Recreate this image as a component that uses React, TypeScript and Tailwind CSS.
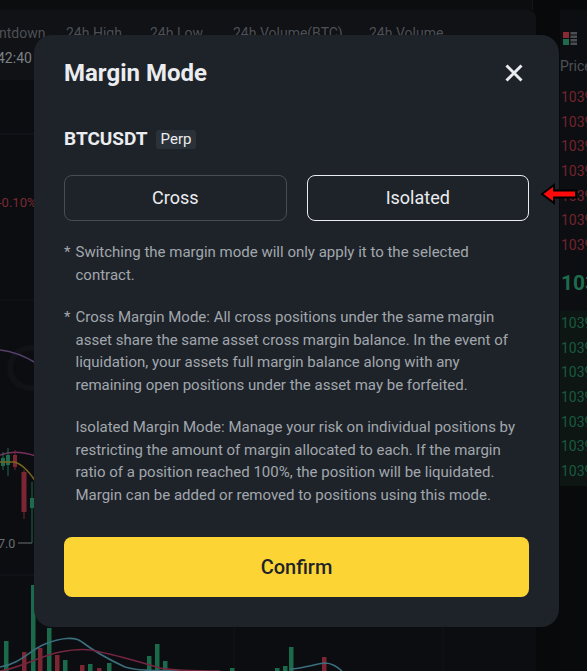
import React from "react";

const redRows = [0, 1, 2, 3, 4, 5, 6];
const greenRows = [0, 1, 2, 3, 4, 5, 6];

function Chart() {
  const bars: { x: number; top: number; c: "g" | "r" }[] = [
    { x: 4, top: 641, c: "g" },
    { x: 22, top: 652, c: "r" },
    { x: 31, top: 585, c: "g" },
    { x: 38, top: 648, c: "r" },
    { x: 47, top: 628, c: "g" },
    { x: 55, top: 655, c: "r" },
    { x: 63, top: 660, c: "g" },
    { x: 80, top: 665, c: "r" },
    { x: 88, top: 664, c: "g" },
    { x: 97, top: 668, c: "r" },
    { x: 107, top: 663, c: "g" },
    { x: 147, top: 656, c: "g" },
    { x: 155, top: 644, c: "g" },
    { x: 163, top: 661, c: "g" },
    { x: 230, top: 668, c: "g" },
    { x: 275, top: 668, c: "g" },
    { x: 283, top: 666, c: "g" },
    { x: 289, top: 647, c: "g" },
    { x: 322, top: 657, c: "r" },
  ];
  return (
    <svg width="536" height="591" viewBox="0 80 536 591" className="block">
      <line x1="0" y1="134" x2="536" y2="134" stroke="#15181c" strokeWidth="1" />
      <line x1="0" y1="300" x2="536" y2="300" stroke="#121519" strokeWidth="1" />
      <line x1="0" y1="575" x2="536" y2="575" stroke="#15181c" strokeWidth="1" />
      <line x1="234" y1="575" x2="234" y2="671" stroke="#121519" strokeWidth="1" />
      <line x1="443" y1="575" x2="443" y2="671" stroke="#121519" strokeWidth="1" />
      <text x="-2" y="207" fill="#7a2a34" fontSize="13" fontFamily="Roboto, sans-serif">
        -0.10%
      </text>
      <circle cx="30" cy="368" r="20" fill="none" stroke="#101215" strokeWidth="6" />
      <path d="M0 350 Q 18 352 36 363" stroke="#54406a" strokeWidth="1.5" fill="none" />
      <path d="M0 455 Q 15 449 36 456" stroke="#7a2f5f" strokeWidth="1.5" fill="none" />
      <line x1="3" y1="452" x2="3" y2="470" stroke="#1c6b4c" strokeWidth="1" />
      <rect x="1" y="458" width="4" height="8" fill="#1c6b4c" />
      <line x1="8" y1="448" x2="8" y2="476" stroke="#1c6b4c" strokeWidth="1" />
      <rect x="6" y="455" width="4" height="10" fill="#1c6b4c" />
      <line x1="15" y1="450" x2="15" y2="470" stroke="#7d2633" strokeWidth="1" />
      <rect x="13" y="455" width="4" height="12" fill="#7d2633" />
      <line x1="24" y1="470" x2="24" y2="519" stroke="#7d2633" strokeWidth="1" />
      <rect x="21.5" y="472" width="5" height="40" fill="#7d2633" />
      <line x1="32" y1="482" x2="32" y2="543" stroke="#1c6b4c" strokeWidth="1" />
      <rect x="30" y="498" width="5" height="10" fill="#1c6b4c" />
      <path d="M0 462 L 14 462 Q 24 464 36 482" stroke="#7a6420" strokeWidth="1.5" fill="none" />
      <text x="-2" y="548" fill="#6b6e73" fontSize="12.5" fontFamily="Roboto, sans-serif">
        7.0
      </text>
      <line x1="18" y1="543" x2="32" y2="543" stroke="#6b6e73" strokeWidth="1" />
      {bars.map((b, i) => (
        <rect
          key={i}
          x={b.x}
          y={b.top}
          width="4.5"
          height={671 - b.top}
          fill={b.c === "g" ? "#1b6a4b" : "#7a2633"}
        />
      ))}
      <path
        d="M0 667 C 20 664 30 650 45 644 C 60 638 75 636 82 642 C 95 652 110 660 125 667 C 140 672 160 670 180 671 M 290 669 C 305 668 315 664 325 663 C 332 663 337 667 342 671"
        stroke="#3b6f7d"
        strokeWidth="1.6"
        fill="none"
      />
      <path
        d="M0 671 C 20 668 40 656 60 652 C 75 649 88 648 100 652 C 120 656 140 662 160 668 C 175 671 195 671 220 671"
        stroke="#762640"
        strokeWidth="1.6"
        fill="none"
      />
    </svg>
  );
}

function OrderBookIcon() {
  return (
    <svg width="14" height="13" viewBox="0 0 14 13">
      <rect x="0" y="0" width="6" height="6" fill="#8a2a35" />
      <rect x="0" y="7" width="6" height="6" fill="#1d6b4a" />
      <rect x="7.5" y="0" width="6.5" height="2.5" fill="#4a4d52" />
      <rect x="7.5" y="3.5" width="6.5" height="2.5" fill="#4a4d52" />
      <rect x="7.5" y="7" width="6.5" height="2.5" fill="#4a4d52" />
      <rect x="7.5" y="10.5" width="6.5" height="2.5" fill="#4a4d52" />
    </svg>
  );
}

export default function App() {
  return (
    <div className="relative w-[587px] h-[671px] overflow-hidden bg-[#08090b] font-['Roboto',sans-serif]">
      <div className="flex flex-col h-full">
        <div className="h-[10px] flex">
          <div className="w-[533px] bg-[#0b0d0f] border-r border-[#15171a]" />
          <div className="flex-1 bg-[#08090b]" />
        </div>
        <div className="flex flex-1">
          <div className="w-[536px] flex flex-col">
            <div className="h-[70px] bg-[#101215] rounded-tr-[8px] flex flex-col pt-[14px]">
              <div className="flex text-[14px] leading-[18px] text-[#4c5056] whitespace-nowrap">
                <span className="w-[67px] -ml-[1px]">ntdown</span>
                <span className="w-[84px]">24h High</span>
                <span className="w-[83px]">24h Low</span>
                <span className="w-[136px]">24h Volume(BTC)</span>
                <span>24h Volume</span>
              </div>
              <div className="mt-[7px] text-[14px] leading-[18px] text-[#7c8086] -ml-[3px]">42:40</div>
            </div>
            <div className="flex-1 bg-[#0b0d10] overflow-hidden">
              <Chart />
            </div>
          </div>
          <div className="w-[24px] bg-[#08090b]" />
          <div className="w-[27px] flex flex-col bg-[#0c0e11] overflow-hidden whitespace-nowrap">
            <div className="pt-[22px] pl-[3px]">
              <OrderBookIcon />
            </div>
            <div className="mt-[12px] text-[14px] leading-[18px] text-[#4d5157]">Price</div>
            <div className="mt-[10px] flex flex-col">
              {redRows.map((i) => (
                <div key={i} className="h-[24.7px] leading-[24.7px] text-[14px] text-[#74242f] pl-[1px]">
                  103950.5
                </div>
              ))}
            </div>
            <div className="mt-[10px] h-[30px] leading-[30px] text-[21px] font-bold text-[#1e6a4c] pl-[1px]">
              103950
            </div>
            <div className="mt-[13px] bg-[#0d1613] pb-[2px] flex flex-col">
              {greenRows.map((i) => (
                <div key={i} className="h-[24.7px] leading-[24.7px] text-[14px] text-[#195a40] pl-[1px]">
                  103949.9
                </div>
              ))}
            </div>
            <div className="flex-1 bg-[#090a0c]" />
          </div>
        </div>
      </div>

      <div className="absolute left-[34px] top-[35px] w-[525px] h-[592px] rounded-[18px] bg-[#1e2329] px-[30px] pt-[22px] pb-[30px] flex flex-col text-[#eaecef]">
        <div className="flex items-center justify-between h-[32px]">
          <h2 className="text-[24px] leading-[32px] font-bold">Margin Mode</h2>
          <svg width="20" height="20" viewBox="0 0 20 20" className="mr-[5px]">
            <path d="M2.5 2.5 L17.5 17.5 M17.5 2.5 L2.5 17.5" stroke="#eaecef" strokeWidth="3" strokeLinecap="butt" />
          </svg>
        </div>
        <div className="mt-[36px] h-[28px] flex items-center gap-[8px]">
          <span className="text-[19px] leading-[28px] font-bold">BTCUSDT</span>
          <span className="h-[19px] px-[5px] rounded-[3px] bg-[#2b3139] text-[15px] leading-[19px] text-[#eaecef]">
            Perp
          </span>
        </div>
        <div className="mt-[22px] grid grid-cols-2 gap-[20px]">
          <button className="h-[46px] pb-[2px] rounded-[8px] border border-[#474d57] text-[18px] font-normal text-[#eaecef]">
            Cross
          </button>
          <button className="h-[46px] pb-[2px] rounded-[8px] border-[1.5px] border-[#eaecef] text-[18px] font-normal text-[#eaecef]">
            Isolated
          </button>
        </div>
        <div className="mt-[20px] flex flex-col gap-[20px] text-[15px] leading-[22.5px] text-[#a2a7ae]">
          <div className="flex">
            <span className="w-[11.5px] shrink-0">*</span>
            <p>Switching the margin mode will only apply it to the selected contract.</p>
          </div>
          <div className="flex">
            <span className="w-[11.5px] shrink-0">*</span>
            <p>
              Cross Margin Mode: All cross positions under the same margin asset share the same asset cross
              margin balance. In the event of liquidation, your assets full margin balance along with any
              remaining open positions under the asset may be forfeited.
            </p>
          </div>
          <div className="flex">
            <span className="w-[11.5px] shrink-0" />
            <p>
              Isolated Margin Mode: Manage your risk on individual positions by restricting the amount of
              margin allocated to each. If the margin ratio of a position reached 100%, the position will be
              liquidated. Margin can be added or removed to positions using this mode.
            </p>
          </div>
        </div>
        <button className="mt-[31px] h-[60px] rounded-[8px] bg-[#fcd535] text-[20px] font-medium text-[#1e2329]">
          Confirm
        </button>
      </div>

      <svg width="38" height="24" viewBox="0 0 38 24" className="absolute left-[540px] top-[182px]">
        <path
          d="M2 12 L14 3 L14 8.5 L36 8.5 L36 15.5 L14 15.5 L14 21 Z"
          fill="#ff0a0a"
          stroke="#000"
          strokeWidth="2"
          strokeLinejoin="miter"
        />
      </svg>
    </div>
  );
}
